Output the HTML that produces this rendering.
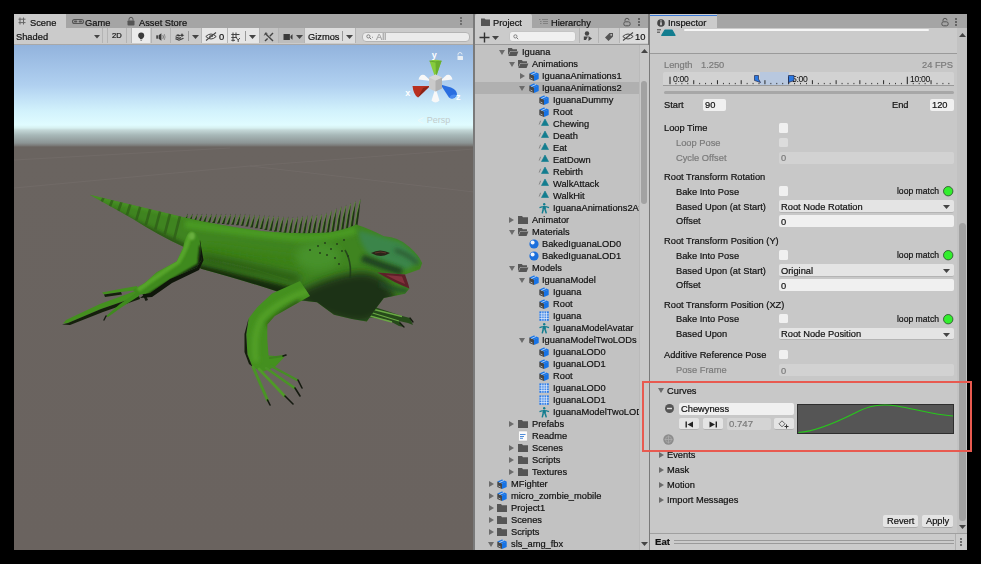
<!DOCTYPE html><html><head><meta charset="utf-8"><style>
*{margin:0;padding:0;box-sizing:border-box}
html,body{width:981px;height:564px;overflow:hidden;background:#000}
body{position:relative;font-family:"Liberation Sans",sans-serif;font-size:9.2px;color:#111;-webkit-font-smoothing:antialiased}
.a{position:absolute}
.t{position:absolute;white-space:nowrap;line-height:12px;font-size:9.3px;will-change:transform;-webkit-text-stroke:0.2px currentColor}
.dis{color:#7a7a7a}
svg{position:absolute;overflow:visible}
.clip{position:absolute;overflow:hidden}
</style></head><body>
<svg width="0" height="0" style="position:absolute"><defs>
<g id="ic-model"><path d="M0.3 2.6 L5 4.6 L5 10 L0.3 8 Z" fill="#474747"/><path d="M5 4.6 L9.7 2.6 L9.7 8 L5 10 Z" fill="#1673e6"/><path d="M0.3 2.6 L5 0.5 L9.7 2.6 L5 4.6 Z" fill="#1673e6"/><path d="M2.4 3.5 L7.2 1.4" stroke="#d8e6f8" stroke-width="0.8"/><path d="M1.5 7 L3.5 8" stroke="#ddd" stroke-width="0.7"/></g>
<g id="ic-folder"><path d="M0 1 L4 1 L5 2.2 L10 2.2 L10 9 L0 9 Z" fill="#555"/></g>
<g id="ic-folderopen"><path d="M0 1 L3.8 1 L4.8 2.2 L9 2.2 L9 4 L2.2 4 L0 8.6 Z" fill="#555"/><path d="M2.4 4.6 L10.4 4.6 L8.6 9 L0.4 9 Z" fill="#555"/></g>
<g id="ic-clip"><path d="M2.5 6.5 L6 0 L9.5 6.5 Z" fill="#137d8f" stroke="#137d8f" stroke-width="0.6" stroke-linejoin="round"/><path d="M0.2 5.5 L1.6 1.8" stroke="#777" stroke-width="0.8"/></g>
<g id="ic-avatar" fill="#137d8f"><circle cx="5.2" cy="1.2" r="1.2"/><path d="M3.6 3 L6.8 3 L7 6.8 L3.4 6.8 Z"/><path d="M0.3 4 L3.6 3 L3.6 4.2 L0.6 5.2 Z"/><path d="M10.2 4 L6.8 3 L6.8 4.2 L9.8 5.2 Z"/><path d="M3.4 6.6 L5 6.8 L3.9 10.4 L2.5 10.2 Z"/><path d="M7 6.6 L5.4 6.8 L6.6 10.4 L8 10.2 Z"/></g>
<g id="ic-mat"><circle cx="5" cy="5" r="4.6" fill="#1b6fdc"/><circle cx="3.6" cy="3.6" r="2" fill="#f2f6fc"/></g>
<g id="ic-mesh"><rect x="0.4" y="0.4" width="9.4" height="9.4" fill="#2a7ae6"/><path d="M0.4 2.8H9.8M0.4 5.1H9.8M0.4 7.4H9.8M2.8 0.4V9.8M5.1 0.4V9.8M7.4 0.4V9.8" stroke="#e8f0fb" stroke-width="0.8"/></g>
<g id="ic-readme"><rect x="0.5" y="0" width="9" height="10" rx="1" fill="#fafafa" stroke="#aaa" stroke-width="0.5"/><path d="M2 3.5H7.5M2 5.5H6M2 7.3H5" stroke="#3b7fd4" stroke-width="0.9"/></g>
<g id="arr-down"><path d="M0 0 L6 0 L3 5 Z" fill="#6b6b6b"/></g>
<g id="arr-right"><path d="M0 0 L5 3 L0 6 Z" fill="#6b6b6b"/></g>
<g id="drop"><path d="M0 0 L7 0 L3.5 4 Z" fill="#444"/></g>
<g id="dots"><circle cx="1" cy="1" r="0.9"/><circle cx="1" cy="4" r="0.9"/><circle cx="1" cy="7" r="0.9"/></g>
</defs></svg>
<div class="a" style="left:14px;top:14px;width:459px;height:14px;background:#a5a5a5"></div>
<div class="a" style="left:14px;top:14px;width:52px;height:15px;background:#cbcbcb"></div>
<div class="a" style="left:14px;top:28px;width:459px;height:16px;background:#cbcbcb"></div>
<div class="a" style="left:14px;top:43.5px;width:459px;height:1px;background:#a8a8a8"></div>
<div class="a" style="left:14px;top:44.5px;width:459px;height:505.5px;background:linear-gradient(#92b3dd 0px,#b0d0f0 40px,#d2f2fc 66px,#e0fcff 80px,#d6f0f0 83px,#c4d8d8 85px,#a8b8b8 90px,#8c9494 98px,#7a7a78 100.5px,#6a6460 102px,#6a635f 506px)"></div>
<svg style="left:14px;top:44px" width="459" height="506" viewBox="14 44 459 506">
<defs>
<filter id="b1" x="-50%" y="-50%" width="200%" height="200%"><feGaussianBlur stdDeviation="0.9"/></filter>
<filter id="b2" x="-50%" y="-50%" width="200%" height="200%"><feGaussianBlur stdDeviation="2"/></filter>
<filter id="b4" x="-50%" y="-50%" width="200%" height="200%"><feGaussianBlur stdDeviation="4"/></filter>
<filter id="b6" x="-50%" y="-50%" width="200%" height="200%"><feGaussianBlur stdDeviation="6"/></filter>
<clipPath id="silc"><path d="M89.7 194.8 Q132 205 183.6 217.2 Q222 226 265 231.5 Q300 234.5 329 232.5 Q345 230 356.2 224.6 Q369 228.8 383.8 236.3 Q398.7 237 409.4 246.9 Q418 254 422.1 262.9 L420 269.3 L405 274.6 L377.4 272.4 L409.4 288.4 L405 293.7 L383.8 298 L377.4 306.5 L366.8 321.4 L352 319 L334 314.7 L317 302.3 L297 300 L275.7 291 Q243.8 280.4 201 268.7 L193 262 L183.6 246.7 Q160 236 132.2 218.4 Q106 204 89.7 194.8 Z"/></clipPath>
<clipPath id="armc"><path d="M300 281 L272 293.6 L257.3 307.2 L248.6 318.4 L246.2 334.5 L247.4 354.4 L252.4 366.8 L262 372 L275 367 L284.6 356.8 L268.5 355.6 L267.3 339.5 L267.3 324.6 L274.7 315.9 L294.5 304.7 L310 296 Z"/></clipPath>
</defs>
<!-- faint ground lines -->
<path d="M14 188 L250 166 L474 192 M14 160 L230 148 M250 166 L474 149" stroke="#7a7370" stroke-width="0.8" fill="none" opacity="0.5"/>
<!-- far front leg -->
<path d="M352 303 L373 306.5 L390 312 L402 316 L410 318 L413 325 L408 323 L399 321 L404 327 L399 326 L388 320 L375 318 L356 316 Z" fill="#264a1a"/>
<path d="M370 308.5 L402 316.5 M371 312.5 L399 321 M370 316 L392 322" stroke="#6aa844" stroke-width="1.3"/>
<g stroke="#151a10" stroke-width="1.3" stroke-linecap="round"><path d="M410 318 L413 322"/><path d="M400 323 L404 327"/></g>
<!-- crest -->
<path d="M183.7 220.6 Q185.6 217.5 187.9 213.5 Q187.3 218.0 186.3 220.6 Z" fill="#1f3414"/>
<path d="M184.0 219.6 Q185.3 217.5 187.5 215.0" stroke="#5e9e34" stroke-width="0.7" fill="none"/>
<path d="M188.4 221.0 Q190.3 217.7 192.7 213.5 Q192.1 218.3 191.1 221.0 Z" fill="#1f3414"/>
<path d="M188.8 220.0 Q190.0 217.7 192.3 215.0" stroke="#5e9e34" stroke-width="0.7" fill="none"/>
<path d="M193.2 221.4 Q195.1 217.9 197.5 213.5 Q196.9 218.5 195.8 221.4 Z" fill="#1f3414"/>
<path d="M193.5 220.4 Q194.8 217.9 197.1 215.0" stroke="#5e9e34" stroke-width="0.7" fill="none"/>
<path d="M197.9 221.9 Q199.9 218.0 202.3 213.5 Q201.7 218.7 200.6 221.9 Z" fill="#1f3414"/>
<path d="M198.2 220.9 Q199.6 218.0 201.9 215.0" stroke="#5e9e34" stroke-width="0.7" fill="none"/>
<path d="M202.7 222.3 Q204.6 218.2 207.0 213.5 Q206.4 218.9 205.3 222.3 Z" fill="#1f3414"/>
<path d="M203.0 221.3 Q204.3 218.2 206.6 215.0" stroke="#5e9e34" stroke-width="0.7" fill="none"/>
<path d="M207.4 222.7 Q209.4 218.4 211.8 213.5 Q211.2 219.1 210.1 222.7 Z" fill="#1f3414"/>
<path d="M207.8 221.7 Q209.1 218.4 211.4 215.0" stroke="#5e9e34" stroke-width="0.7" fill="none"/>
<path d="M212.2 223.1 Q214.1 218.6 216.6 213.5 Q216.0 219.3 214.8 223.1 Z" fill="#1f3414"/>
<path d="M212.5 222.1 Q213.8 218.6 216.2 215.0" stroke="#5e9e34" stroke-width="0.7" fill="none"/>
<path d="M216.9 223.6 Q218.9 218.7 221.4 213.5 Q220.7 219.5 219.6 223.6 Z" fill="#1f3414"/>
<path d="M217.2 222.6 Q218.6 218.7 221.0 215.0" stroke="#5e9e34" stroke-width="0.7" fill="none"/>
<path d="M221.7 224.0 Q223.6 218.9 226.2 213.5 Q225.5 219.7 224.3 224.0 Z" fill="#1f3414"/>
<path d="M222.0 223.0 Q223.3 218.9 225.8 215.0" stroke="#5e9e34" stroke-width="0.7" fill="none"/>
<path d="M226.4 224.4 Q228.4 219.1 231.0 213.5 Q230.3 220.0 229.1 224.4 Z" fill="#1f3414"/>
<path d="M226.8 223.4 Q228.1 219.1 230.6 215.0" stroke="#5e9e34" stroke-width="0.7" fill="none"/>
<path d="M231.2 224.8 Q233.1 219.2 235.7 213.5 Q235.0 220.2 233.8 224.8 Z" fill="#1f3414"/>
<path d="M231.5 223.8 Q232.8 219.2 235.3 215.0" stroke="#5e9e34" stroke-width="0.7" fill="none"/>
<path d="M235.9 225.3 Q237.9 219.4 240.5 213.5 Q239.8 220.4 238.6 225.3 Z" fill="#1f3414"/>
<path d="M236.2 224.3 Q237.6 219.4 240.1 215.0" stroke="#5e9e34" stroke-width="0.7" fill="none"/>
<path d="M240.7 225.8 Q242.7 219.7 245.3 213.6 Q244.6 220.7 243.3 225.8 Z" fill="#1f3414"/>
<path d="M241.0 224.8 Q242.3 219.7 244.9 215.1" stroke="#5e9e34" stroke-width="0.7" fill="none"/>
<path d="M245.4 226.6 Q247.4 220.2 250.1 213.9 Q249.4 221.3 248.1 226.6 Z" fill="#1f3414"/>
<path d="M245.8 225.6 Q247.1 220.2 249.7 215.4" stroke="#5e9e34" stroke-width="0.7" fill="none"/>
<path d="M250.2 227.5 Q252.2 220.7 254.9 214.2 Q254.1 221.8 252.8 227.5 Z" fill="#1f3414"/>
<path d="M250.5 226.5 Q251.8 220.7 254.5 215.7" stroke="#5e9e34" stroke-width="0.7" fill="none"/>
<path d="M254.9 228.3 Q256.9 221.2 259.7 214.5 Q258.9 222.4 257.6 228.3 Z" fill="#1f3414"/>
<path d="M255.2 227.3 Q256.6 221.2 259.3 216.0" stroke="#5e9e34" stroke-width="0.7" fill="none"/>
<path d="M259.7 229.1 Q261.7 221.7 264.5 214.8 Q263.7 222.9 262.3 229.1 Z" fill="#1f3414"/>
<path d="M260.0 228.1 Q261.3 221.7 264.1 216.3" stroke="#5e9e34" stroke-width="0.7" fill="none"/>
<path d="M264.4 229.9 Q266.5 222.2 269.3 215.0 Q268.5 223.5 267.1 229.9 Z" fill="#1f3414"/>
<path d="M264.8 228.9 Q266.1 222.2 268.9 216.5" stroke="#5e9e34" stroke-width="0.7" fill="none"/>
<path d="M269.2 230.7 Q271.2 222.7 274.1 215.3 Q273.2 224.0 271.8 230.7 Z" fill="#1f3414"/>
<path d="M269.5 229.7 Q270.9 222.7 273.7 216.8" stroke="#5e9e34" stroke-width="0.7" fill="none"/>
<path d="M273.9 231.5 Q276.0 223.2 278.9 215.6 Q278.0 224.6 276.6 231.5 Z" fill="#1f3414"/>
<path d="M274.2 230.5 Q275.6 223.2 278.5 217.1" stroke="#5e9e34" stroke-width="0.7" fill="none"/>
<path d="M278.7 232.3 Q280.7 223.7 283.7 215.9 Q282.8 225.1 281.3 232.3 Z" fill="#1f3414"/>
<path d="M279.0 231.3 Q280.4 223.7 283.3 217.4" stroke="#5e9e34" stroke-width="0.7" fill="none"/>
<path d="M283.4 233.1 Q285.5 224.2 288.4 216.2 Q287.6 225.6 286.1 233.1 Z" fill="#1f3414"/>
<path d="M283.8 232.1 Q285.1 224.2 288.0 217.7" stroke="#5e9e34" stroke-width="0.7" fill="none"/>
<path d="M288.2 233.9 Q290.2 224.6 293.2 216.5 Q292.3 226.2 290.8 233.9 Z" fill="#1f3414"/>
<path d="M288.5 232.9 Q289.9 224.6 292.8 218.0" stroke="#5e9e34" stroke-width="0.7" fill="none"/>
<path d="M292.9 234.0 Q295.0 224.4 298.0 216.1 Q297.1 226.0 295.6 234.0 Z" fill="#1f3414"/>
<path d="M293.2 233.0 Q294.6 224.4 297.6 217.6" stroke="#5e9e34" stroke-width="0.7" fill="none"/>
<path d="M297.7 234.0 Q299.8 224.2 302.8 215.6 Q301.9 225.8 300.3 234.0 Z" fill="#1f3414"/>
<path d="M298.0 233.0 Q299.4 224.2 302.4 217.1" stroke="#5e9e34" stroke-width="0.7" fill="none"/>
<path d="M302.4 234.0 Q304.5 223.9 307.6 215.1 Q306.7 225.6 305.1 234.0 Z" fill="#1f3414"/>
<path d="M302.8 233.0 Q304.1 223.9 307.2 216.6" stroke="#5e9e34" stroke-width="0.7" fill="none"/>
<path d="M307.2 234.0 Q309.3 223.6 312.4 214.7 Q311.4 225.3 309.8 234.0 Z" fill="#1f3414"/>
<path d="M307.5 233.0 Q308.9 223.6 312.0 216.2" stroke="#5e9e34" stroke-width="0.7" fill="none"/>
<path d="M311.9 234.0 Q314.0 223.3 317.2 214.2 Q316.2 225.1 314.6 234.0 Z" fill="#1f3414"/>
<path d="M312.2 233.0 Q313.6 223.3 316.8 215.7" stroke="#5e9e34" stroke-width="0.7" fill="none"/>
<path d="M316.7 234.0 Q318.8 223.0 322.0 213.7 Q321.0 224.8 319.3 234.0 Z" fill="#1f3414"/>
<path d="M317.0 233.0 Q318.4 223.0 321.6 215.2" stroke="#5e9e34" stroke-width="0.7" fill="none"/>
<path d="M321.4 233.7 Q323.6 222.0 326.8 212.2 Q325.8 224.0 324.1 233.7 Z" fill="#1f3414"/>
<path d="M321.8 232.7 Q323.2 222.0 326.4 213.7" stroke="#5e9e34" stroke-width="0.7" fill="none"/>
<path d="M326.2 233.2 Q328.3 220.5 331.7 210.0 Q330.6 222.6 328.8 233.2 Z" fill="#1f3414"/>
<path d="M326.5 232.2 Q327.9 220.5 331.3 211.5" stroke="#5e9e34" stroke-width="0.7" fill="none"/>
<path d="M330.9 232.8 Q333.1 219.0 336.6 207.8 Q335.5 221.3 333.6 232.8 Z" fill="#1f3414"/>
<path d="M331.2 231.8 Q332.7 219.0 336.2 209.3" stroke="#5e9e34" stroke-width="0.7" fill="none"/>
<path d="M335.7 232.3 Q337.9 217.7 341.4 206.0 Q340.3 220.2 338.3 232.3 Z" fill="#1f3414"/>
<path d="M336.0 231.3 Q337.4 217.7 341.0 207.5" stroke="#5e9e34" stroke-width="0.7" fill="none"/>
<path d="M340.4 231.4 Q342.6 216.5 346.2 204.5 Q345.0 219.0 343.1 231.4 Z" fill="#1f3414"/>
<path d="M340.8 230.4 Q342.2 216.5 345.8 206.0" stroke="#5e9e34" stroke-width="0.7" fill="none"/>
<path d="M345.2 229.9 Q347.4 214.6 351.0 202.4 Q349.8 217.1 347.8 229.9 Z" fill="#1f3414"/>
<path d="M345.5 228.9 Q347.0 214.6 350.6 203.9" stroke="#5e9e34" stroke-width="0.7" fill="none"/>
<path d="M349.9 228.4 Q352.2 212.8 355.8 200.4 Q354.6 215.4 352.6 228.4 Z" fill="#1f3414"/>
<path d="M350.2 227.4 Q351.7 212.8 355.4 201.9" stroke="#5e9e34" stroke-width="0.7" fill="none"/>
<path d="M354.7 226.8 Q356.9 211.2 360.6 198.8 Q359.3 213.8 357.3 226.8 Z" fill="#1f3414"/>
<path d="M355.0 225.8 Q356.5 211.2 360.2 200.3" stroke="#5e9e34" stroke-width="0.7" fill="none"/>
<!-- back toes -->
<path d="M138 290 L100 304 L66 320 L63 323.5 L68 323 L101 309 L139 296 Z" fill="#44901f"/>
<path d="M139 296 L101 309 L68 323 L62 324.5 L70 325 L103 312 L140 299 Z" fill="#15200c"/>
<path d="M137 286 L120 289 L102 292.5 L104 294.5 L121 292 L138 290 Z" fill="#44901f"/>
<path d="M104 294.5 L121 292 L122 294.5 L105 297 Z" fill="#15200c"/>
<path d="M137 292 L120 304 L106 316 L108 317 L122 307 L139 296 Z" fill="#3f8a1e"/>
<path d="M106 316 L104 320" stroke="#151a10" stroke-width="1.4" stroke-linecap="round"/>
<path d="M142 293 L145.5 301 L148 300 L145 293 Z" fill="#151a10"/>
<!-- silhouette -->
<path d="M89.7 194.8 Q132 205 183.6 217.2 Q222 226 265 231.5 Q300 234.5 329 232.5 Q345 230 356.2 224.6 Q369 228.8 383.8 236.3 Q398.7 237 409.4 246.9 Q418 254 422.1 262.9 L420 269.3 L405 274.6 L377.4 272.4 L409.4 288.4 L405 293.7 L383.8 298 L377.4 306.5 L366.8 321.4 L352 319 L334 314.7 L317 302.3 L297 300 L275.7 291 Q243.8 280.4 201 268.7 L193 262 L183.6 246.7 Q160 236 132.2 218.4 Q106 204 89.7 194.8 Z" fill="#3f8420"/>
<g clip-path="url(#silc)">
  <!-- tail shading -->
  <path d="M89 194 Q132 204 184 216" stroke="#4e9a28" stroke-width="4" fill="none" filter="url(#b2)"/>
  <path d="M110 212 Q150 232 190 250" stroke="#2a5216" stroke-width="8" fill="none" filter="url(#b2)"/>
  <g stroke="#2f5c18" stroke-width="2.6" opacity="0.75"><path d="M104 196.7 L101.3 202.5"/><path d="M113 198.5 L109.8 206.8"/><path d="M122 200.3 L118.3 211.0"/><path d="M131 202.1 L126.8 215.3"/><path d="M141 204.1 L136.3 220.0"/><path d="M151 206.1 L145.8 224.8"/><path d="M161 208.1 L155.3 229.5"/><path d="M171 210.1 L164.7 234.2"/><path d="M181 212.1 L174.2 239.0"/></g>
  <!-- body top highlight -->
  <path d="M185 224 Q240 232 300 238 Q330 238 356 230" stroke="#4a9a22" stroke-width="8" fill="none" filter="url(#b2)"/>
  <!-- mid darker band -->
  <path d="M200 248 Q250 256 300 262" stroke="#3a8018" stroke-width="10" fill="none" filter="url(#b4)"/>
  <path d="M222 262 Q255 268 288 280" stroke="#55a02a" stroke-width="1" fill="none" opacity="0.8"/>
  <!-- lower shadow -->
  <path d="M196 270 Q240 281 300 296" stroke="#142a0a" stroke-width="14" fill="none" filter="url(#b2)"/>
  <path d="M200 258 Q250 268 300 280" stroke="#2a5a14" stroke-width="10" fill="none" filter="url(#b4)"/>
  <!-- shoulder highlight -->
  <ellipse cx="318" cy="256" rx="22" ry="14" fill="#46922a" filter="url(#b4)"/>
  <!-- throat dark -->
  <path d="M292 296 Q325 276 360 272 Q388 272 396 300 Q380 322 360 324 Q320 320 292 296 Z" fill="#1c3212" filter="url(#b4)"/>
  <!-- head top teal -->
  <path d="M358 230 Q380 236 400 242 Q415 252 420 262 L405 270 Q385 262 370 255 Q360 246 358 230 Z" fill="#3a8654" filter="url(#b2)" opacity="0.8"/>
  <path d="M362 258 Q382 266 402 272" stroke="#1f4022" stroke-width="7" fill="none" filter="url(#b2)"/>
  <path d="M395 250 Q410 255 418 264" stroke="#2c5a32" stroke-width="4" fill="none" filter="url(#b2)"/>
  <path d="M380 284 Q395 290 408 291" stroke="#24482a" stroke-width="4" fill="none" filter="url(#b2)"/>
  <g fill="#24401a">
  <circle cx="318" cy="246" r="1"/><circle cx="325" cy="243" r="1"/><circle cx="331" cy="249" r="1"/><circle cx="337" cy="244" r="1"/><circle cx="342" cy="251" r="1"/><circle cx="327" cy="255" r="1"/><circle cx="335" cy="258" r="1"/><circle cx="344" cy="240" r="1"/><circle cx="348" cy="256" r="1"/><circle cx="320" cy="253" r="1"/><circle cx="310" cy="250" r="1"/><circle cx="339" cy="264" r="1"/>
  </g>
</g>
<!-- back leg (front of body) -->
<defs><clipPath id="legc"><path d="M190 231 Q198 230 200.5 245.6 L201.2 260.2 L196.5 267.5 L170 279 L150 293 L138 295 L133 290 L145 282.7 L156.6 272.2 L176.6 261.5 L183 248 Q185 236 190 231 Z"/></clipPath></defs>
<path d="M200 240 L203.5 260.2 L199 270 L172 283 L152 297 L140 298 L150 290 L170 276 L195 264 Z" fill="#0f160a"/>
<path d="M190 231 Q198 230 200.5 245.6 L201.2 260.2 L196.5 267.5 L170 279 L150 293 L138 295 L133 290 L145 282.7 L156.6 272.2 L176.6 261.5 L183 248 Q185 236 190 231 Z" fill="#3f8a1e"/>
<g clip-path="url(#legc)">
<path d="M190 234 Q186 250 178 262 Q160 274 138 290" stroke="#56a42a" stroke-width="5" fill="none" filter="url(#b1)"/>
<path d="M203 246 L201 266 L172 283 L150 297" stroke="#0e1608" stroke-width="7" fill="none" filter="url(#b1)"/>
<ellipse cx="192" cy="236" rx="3" ry="4" fill="#6ab040" filter="url(#b1)"/>
</g>
<path d="M345 250 Q352 262 350 278" stroke="#1f3a1a" stroke-width="1.6" fill="none" opacity="0.8"/>
<!-- mouth -->
<path d="M377.4 272.4 L405 274.6 Q408 283 409.4 288.4 Q395 283 377.4 272.4 Z" fill="#5e2028"/>
<path d="M386 275 L402 276.5 L405 284 Q395 280 386 275 Z" fill="#8a3440" opacity="0.85"/>
<path d="M371 253 Q380 248 390 253 Q381 259 371 253 Z" fill="#2a2418"/><path d="M375 253 Q381 251 386 253" stroke="#6a3a30" stroke-width="0.8" fill="none"/>
<!-- near front leg -->
<path d="M300 281 L272 293.6 L257.3 307.2 L248.6 318.4 L246.2 334.5 L247.4 354.4 L252.4 366.8 L262 372 L275 367 L284.6 356.8 L268.5 355.6 L267.3 339.5 L267.3 324.6 L274.7 315.9 L294.5 304.7 L310 296 Z" fill="#44901f"/>
<g clip-path="url(#armc)">
  <path d="M310 290 Q280 300 262 318 Q252 335 256 362" stroke="#52a028" stroke-width="6" fill="none" filter="url(#b2)"/>
  <path d="M246 320 L246 356" stroke="#1c3010" stroke-width="3" fill="none" filter="url(#b2)"/>
  <path d="M300 302 Q280 312 268 326" stroke="#2a5418" stroke-width="5" fill="none" filter="url(#b2)"/>
</g>
<path d="M246.2 334.5 L247.4 354.4 L252.4 366.8 L249 364 L244.5 352 L244.5 334 L248.6 318.4 Z" fill="#141e0c"/>
<g stroke-linecap="round" fill="none">
<path d="M253 367 L267.5 400" stroke="#4a9426" stroke-width="3"/>
<path d="M259 369 L284.6 396" stroke="#4f9a28" stroke-width="2.8"/>
<path d="M266 368 L294.5 388" stroke="#4a9426" stroke-width="2.6"/>
<path d="M271 366 L297 380" stroke="#468e24" stroke-width="2.4"/>
<path d="M270 358 L283 356" stroke="#3f8020" stroke-width="2"/>
</g>
<g stroke="#151a10" stroke-width="1.6" stroke-linecap="round">
<path d="M267.5 400 L270 405"/><path d="M285 396 L293 404"/><path d="M295 388 L300 396"/><path d="M298 380 L302 388"/><path d="M283 356 L286 355"/>
</g>
<!-- gizmo -->
<path d="M429.5 61 Q435.5 58.5 441.5 61 L436 77 L435 77 Z" fill="#86cc3c"/>
<path d="M429.5 61 Q435.5 63 441.5 61" stroke="#5a9a2a" stroke-width="0.8" fill="none"/>
<path d="M435.5 61.5 L441.5 61 L436 77 Z" fill="#6aae2e"/>
<path d="M412.5 86 Q413.5 95 418 97.5 L430 86 Z" fill="#b83020"/>
<path d="M418 97.5 L430 86 L423 88 Z" fill="#8a2418"/>
<path d="M440.5 84.5 L451 87.5 Q457.5 90 457 95.5 Q453.5 100 449 97.5 Z" fill="#2a6ee0"/>
<path d="M449 97.5 Q453.5 100 457 95.5 Q452 93 449 97.5 Z" fill="#4a8cf0"/>
<path d="M418.5 79.5 Q420 73.5 424.5 75 L431 81 Z" fill="#f8f8f8"/>
<path d="M452.5 79.5 Q451 73.5 446.5 75 L440 81 Z" fill="#f8f8f8"/>
<path d="M431.5 100.5 Q435.5 104.5 439.5 100.5 L435.5 88 Z" fill="#f8f8f8"/>
<path d="M429 77.5 L435.5 74.5 L442 77.5 L442 88.5 L435.5 91.5 L429 88.5 Z" fill="#cacaca"/>
<path d="M435.5 80.5 L442 77.5 L442 88.5 L435.5 91.5 Z" fill="#b0b0b0"/>
<path d="M429 77.5 L435.5 74.5 L442 77.5 L435.5 80.5 Z" fill="#d8d8d8"/>
<text x="431.8" y="57.5" font-family="Liberation Sans" font-size="9" font-weight="bold" fill="#fff">y</text>
<text x="405.2" y="96" font-family="Liberation Sans" font-size="9" font-weight="bold" fill="#fff">x</text>
<text x="456" y="99.5" font-family="Liberation Sans" font-size="9" font-weight="bold" fill="#fff">z</text>
<path d="M458 55.5 V54.5 A2 2 0 0 1 462 54.5" stroke="#e8eef4" stroke-width="0.9" fill="none"/>
<rect x="457.5" y="56" width="5.5" height="4" rx="0.5" fill="#e8eef4"/>
<text x="426.8" y="122.8" font-family="Liberation Sans" font-size="9" fill="#c2cccc">Persp</text>
<path d="M423.5 117.5 L418 120.5 L423.5 123.5" stroke="#eef8f8" stroke-width="1" fill="none"/>
</svg>
<div class="t " style="left:30px;top:16.6px;">Scene</div>
<svg style="left:18px;top:17px;" width="8" height="8" viewBox="0 0 8 8"><path d="M2 0.5V7.5M5.5 0.5V7.5M0.5 2.2H7.5M0.5 5.6H7.5" stroke="#666" stroke-width="1"/></svg>
<div class="t " style="left:85.4px;top:16.6px;">Game</div>
<svg style="left:72px;top:19px;" width="12" height="5" viewBox="0 0 12 5"><rect x="0.5" y="0.5" width="11" height="4" rx="2" fill="none" stroke="#555" stroke-width="1.1"/><rect x="2" y="1.6" width="3.3" height="1.8" rx="0.9" fill="#555"/><rect x="6.7" y="1.6" width="3.3" height="1.8" rx="0.9" fill="#555"/></svg>
<div class="t " style="left:138.8px;top:16.6px;">Asset Store</div>
<svg style="left:127px;top:17px;" width="8" height="9" viewBox="0 0 8 9"><path d="M2 3.5V2.3A2 2 0 0 1 6 2.3V3.5" fill="none" stroke="#555" stroke-width="1"/><rect x="0.5" y="3.4" width="7" height="5.2" rx="0.8" fill="#555"/></svg>
<div class="a" style="left:460px;top:17px;width:3px;height:9px;color:#555"><svg width="2" height="8" style="left:0;top:0" fill="#555"><use href="#dots"/></svg></div>
<div class="t " style="left:16px;top:31.0px;">Shaded</div>
<svg style="left:93.5px;top:35px;" width="6" height="4" viewBox="0 0 6 4"><path d="M0 0H6L3 3.6Z" fill="#444"/></svg>
<div class="a" style="left:102px;top:28px;width:1px;height:15px;background:#b4b4b4"></div>
<div class="a" style="left:107px;top:28px;width:1px;height:15px;background:#b4b4b4"></div>
<div class="a" style="left:108px;top:28px;width:18px;height:15px;background:#cbcbcb"></div>
<div class="t " style="left:111.5px;top:30.4px;font-size:7.6px">2D</div>
<div class="a" style="left:126px;top:28px;width:1px;height:15px;background:#b4b4b4"></div>
<div class="a" style="left:131px;top:28px;width:1px;height:15px;background:#b4b4b4"></div>
<div class="a" style="left:132px;top:28px;width:18px;height:15px;background:#ebebeb"></div>
<svg style="left:137.5px;top:31.5px;" width="7" height="9" viewBox="0 0 7 9"><circle cx="3.2" cy="3.4" r="3" fill="#3a3a3a"/><path d="M1.6 5.5H4.8L4.4 7H2Z" fill="#3a3a3a"/><path d="M2 7.8H4.4L3.8 8.6H2.6Z" fill="#3a3a3a"/></svg>
<div class="a" style="left:151px;top:28px;width:1px;height:15px;background:#b4b4b4"></div>
<div class="a" style="left:152px;top:28px;width:18px;height:15px;background:#cbcbcb"></div>
<svg style="left:155.5px;top:32.5px;" width="10" height="8" viewBox="0 0 10 8"><rect x="0.3" y="2.3" width="1.6" height="3.4" fill="#3a3a3a"/><path d="M2.6 2.3L5.4 0.3V7.7L2.6 5.7Z" fill="#3a3a3a"/><path d="M6.8 2.2Q8 4 6.8 5.8" stroke="#555" stroke-width="0.8" fill="none"/><path d="M8.2 1Q10 4 8.2 7" stroke="#666" stroke-width="0.6" fill="none"/></svg>
<div class="a" style="left:170px;top:28px;width:1px;height:15px;background:#b4b4b4"></div>
<div class="a" style="left:171px;top:28px;width:30px;height:15px;background:#cbcbcb"></div>
<svg style="left:174.5px;top:32.5px;" width="10" height="8" viewBox="0 0 10 8"><path d="M0.5 3.8L4 5.4L6 4.6M0.5 5.6L4 7.2L8.5 5.2" stroke="#3a3a3a" stroke-width="1.2" fill="none"/><path d="M0.5 2.2L3 1.2L6 2.6L4 3.6Z" fill="#3a3a3a"/><path d="M7 0L7.7 1.6L9.4 2.3L7.7 3L7 4.6L6.3 3L4.6 2.3L6.3 1.6Z" fill="#3a3a3a"/></svg>
<div class="a" style="left:188px;top:31px;width:1px;height:10px;background:#999"></div>
<svg style="left:192px;top:34.5px;" width="7" height="4" viewBox="0 0 7 4"><use href="#drop"/></svg>
<div class="a" style="left:201px;top:28px;width:1px;height:15px;background:#b4b4b4"></div>
<div class="a" style="left:202px;top:28px;width:25px;height:15px;background:#e6e6e6"></div>
<svg style="left:205px;top:32px;" width="13" height="9" viewBox="0 0 13 9"><path d="M0.8 4.5Q6 -0.5 11.2 4.5Q6 9.5 0.8 4.5Z" fill="none" stroke="#444" stroke-width="1"/><path d="M1 8.5L11 0.5" stroke="#444" stroke-width="1.1"/><path d="M4 4.5Q6 2.5 8 4.5" stroke="#444" stroke-width="0.9" fill="none"/></svg>
<div class="t " style="left:219px;top:30.8px;font-size:9.4px">0</div>
<div class="a" style="left:227px;top:28px;width:1px;height:15px;background:#b4b4b4"></div>
<div class="a" style="left:228px;top:28px;width:31px;height:15px;background:#e6e6e6"></div>
<svg style="left:231px;top:31.5px;" width="10" height="10" viewBox="0 0 10 10"><path d="M2 0.5V9.5M5 0.5V6M0.3 2.5H8.5M0.3 5.5H6M0.3 8.3H4" stroke="#444" stroke-width="1"/><path d="M5.5 6L7.2 8L8.9 6M7.2 8V10" stroke="#444" stroke-width="1" fill="none"/></svg>
<div class="a" style="left:245px;top:31px;width:1px;height:10px;background:#999"></div>
<svg style="left:249px;top:34.5px;" width="7" height="4" viewBox="0 0 7 4"><use href="#drop"/></svg>
<div class="a" style="left:259px;top:28px;width:1px;height:15px;background:#b4b4b4"></div>
<div class="a" style="left:260px;top:28px;width:18px;height:15px;background:#c4c4c4"></div>
<svg style="left:264px;top:31.5px;" width="10" height="10" viewBox="0 0 10 10"><path d="M1 1.2L9 9" stroke="#444" stroke-width="1.4"/><path d="M9 1L5.8 4.2" stroke="#444" stroke-width="1.4"/><path d="M1 9L3.6 6.4" stroke="#444" stroke-width="1.4"/><path d="M0.3 3.4L2 0.6L3.4 2.2" stroke="#444" stroke-width="1" fill="none"/></svg>
<div class="a" style="left:278px;top:28px;width:1px;height:15px;background:#b4b4b4"></div>
<div class="a" style="left:279px;top:28px;width:25px;height:15px;background:#bdbdbd"></div>
<svg style="left:283px;top:32.5px;" width="11" height="8" viewBox="0 0 11 8"><rect x="0.5" y="1" width="6.4" height="6" fill="#3a3a3a"/><path d="M7.5 3L9.5 1.3V6.7L7.5 5Z" fill="#3a3a3a"/></svg>
<svg style="left:295.5px;top:34.5px;" width="7" height="4" viewBox="0 0 7 4"><use href="#drop"/></svg>
<div class="a" style="left:304px;top:28px;width:1px;height:15px;background:#b4b4b4"></div>
<div class="a" style="left:305px;top:28px;width:50px;height:15px;background:#dedede"></div>
<div class="t " style="left:307.5px;top:31.0px;font-size:9.3px">Gizmos</div>
<div class="a" style="left:342px;top:31px;width:1px;height:10px;background:#999"></div>
<svg style="left:345.5px;top:34.5px;" width="7" height="4" viewBox="0 0 7 4"><use href="#drop"/></svg>
<div class="a" style="left:355px;top:28px;width:1px;height:15px;background:#b4b4b4"></div>
<div class="a" style="left:362px;top:31.5px;width:108px;height:10px;background:#ebebeb;border:1px solid #b4b4b4;border-radius:4px"></div>
<svg style="left:366px;top:33.5px;" width="8" height="6" viewBox="0 0 8 6"><circle cx="2.4" cy="2.4" r="1.6" fill="none" stroke="#777" stroke-width="0.9"/><path d="M3.6 3.6L5.2 5.2" stroke="#777" stroke-width="1"/><path d="M6 2.6L7 3.3L6 4" fill="#777"/></svg>
<div class="t " style="left:375.6px;top:31.0px;color:#a0a0a0;font-size:9.4px">All</div>
<div class="a" style="left:473px;top:14px;width:2px;height:536px;background:#7a7a7a"></div>
<div class="a" style="left:475px;top:14px;width:173px;height:14px;background:#a5a5a5"></div>
<div class="a" style="left:475px;top:14px;width:57px;height:15px;background:#cbcbcb;border-radius:2px 2px 0 0"></div>
<div class="a" style="left:475px;top:28px;width:173px;height:16px;background:#cbcbcb"></div>
<div class="a" style="left:475px;top:43.5px;width:173px;height:1px;background:#999"></div>
<div class="a" style="left:475px;top:44.5px;width:173px;height:505.5px;background:#c2c2c2"></div>
<div class="a" style="left:648px;top:14px;width:2px;height:536px;background:#7a7a7a"></div>
<div class="t " style="left:492.5px;top:16.6px;">Project</div>
<svg style="left:481px;top:17.5px;" width="9" height="8" viewBox="0 0 9 8"><path d="M0 0.5H3.6L4.6 1.6H9V8H0Z" fill="#555"/></svg>
<div class="t " style="left:550.5px;top:16.6px;">Hierarchy</div>
<svg style="left:539px;top:18.5px;" width="9" height="6" viewBox="0 0 9 6"><path d="M0 0.5H1.5M3 0.5H9M1 2.5H2.5M4 2.5H9M1 4.5H2.5M4 4.5H9" stroke="#777" stroke-width="0.8"/></svg>
<svg style="left:622.5px;top:17.5px;" width="8" height="8" viewBox="0 0 8 8"><path d="M2 3.5V2.3A2 2 0 0 1 6 2.3" fill="none" stroke="#555" stroke-width="1"/><rect x="0.8" y="3.8" width="6.4" height="4" rx="1.8" fill="none" stroke="#555" stroke-width="1"/></svg>
<svg style="left:637.5px;top:17.5px" width="2" height="8" fill="#444"><use href="#dots"/></svg>
<svg style="left:478.5px;top:32px;" width="11" height="11" viewBox="0 0 11 11"><path d="M5.5 0.5V10.5M0.5 5.5H10.5" stroke="#333" stroke-width="1.4"/></svg>
<svg style="left:491.5px;top:35.5px;" width="6" height="4" viewBox="0 0 6 4"><use href="#drop"/></svg>
<div class="a" style="left:508.5px;top:31px;width:67.5px;height:11px;background:#f0f0f0;border:1px solid #c4c4c4;border-radius:3px"></div>
<svg style="left:513px;top:34px;" width="6" height="6" viewBox="0 0 6 6"><circle cx="2.4" cy="2.4" r="1.6" fill="none" stroke="#777" stroke-width="0.9"/><path d="M3.6 3.6L5.2 5.2" stroke="#777" stroke-width="1"/></svg>
<div class="a" style="left:578.5px;top:28px;width:1px;height:15px;background:#b4b4b4"></div>
<div class="a" style="left:579.5px;top:28px;width:18.5px;height:15px;background:#cbcbcb"></div>
<svg style="left:583px;top:31px;" width="11" height="11" viewBox="0 0 11 11"><circle cx="4" cy="2.5" r="2.2" fill="#444"/><path d="M0.8 9V5.5H5L3 9Z" fill="#444"/><path d="M5.5 5L9 7.5L5.5 10Z" fill="#444"/></svg>
<div class="a" style="left:598px;top:28px;width:1px;height:15px;background:#b4b4b4"></div>
<div class="a" style="left:599px;top:28px;width:20px;height:15px;background:#cbcbcb"></div>
<svg style="left:603.5px;top:31.5px;" width="10" height="10" viewBox="0 0 10 10"><path d="M1 5.5L5.5 1H9V4.5L4.5 9Z" fill="#555"/><circle cx="7.2" cy="2.8" r="0.9" fill="#cbcbcb"/></svg>
<div class="a" style="left:619px;top:28px;width:1px;height:15px;background:#b4b4b4"></div>
<div class="a" style="left:620px;top:28px;width:28px;height:15px;background:#dcdcdc"></div>
<svg style="left:622px;top:32px;" width="13" height="9" viewBox="0 0 13 9"><path d="M0.8 4.5Q6 -0.5 11.2 4.5Q6 9.5 0.8 4.5Z" fill="none" stroke="#444" stroke-width="1"/><path d="M1 8.5L11 0.5" stroke="#444" stroke-width="1.1"/></svg>
<div class="t " style="left:634.5px;top:31.1px;font-size:9.4px">10</div>
<div class="clip" style="left:475px;top:44.5px;width:163.5px;height:505.5px">
<svg style="left:23.5px;top:5.0px" width="6" height="5"><use href="#arr-down"/></svg>
<svg style="left:32.7px;top:2.5px" width="11" height="11"><use href="#ic-folderopen"/></svg>
<div class="t" style="left:46.5px;top:1.7px">Iguana</div>
<svg style="left:33.9px;top:17.0px" width="6" height="5"><use href="#arr-down"/></svg>
<svg style="left:43.1px;top:14.5px" width="11" height="11"><use href="#ic-folderopen"/></svg>
<div class="t" style="left:56.9px;top:13.7px">Animations</div>
<svg style="left:44.9px;top:28.5px" width="5" height="6"><use href="#arr-right"/></svg>
<svg style="left:53.6px;top:26.5px" width="11" height="11"><use href="#ic-model"/></svg>
<div class="t" style="left:67.4px;top:25.7px">IguanaAnimations1</div>
<div class="a" style="left:0;top:37.0px;width:164px;height:12px;background:#b0b0b0"></div>
<svg style="left:44.4px;top:41.0px" width="6" height="5"><use href="#arr-down"/></svg>
<svg style="left:53.6px;top:38.5px" width="11" height="11"><use href="#ic-model"/></svg>
<div class="t" style="left:67.4px;top:37.7px">IguanaAnimations2</div>
<svg style="left:64.0px;top:50.5px" width="11" height="11"><use href="#ic-model"/></svg>
<div class="t" style="left:77.8px;top:49.7px">IguanaDummy</div>
<svg style="left:64.0px;top:62.5px" width="11" height="11"><use href="#ic-model"/></svg>
<div class="t" style="left:77.8px;top:61.7px">Root</div>
<svg style="left:64.0px;top:74.5px" width="11" height="11"><use href="#ic-clip"/></svg>
<div class="t" style="left:77.8px;top:73.7px">Chewing</div>
<svg style="left:64.0px;top:86.5px" width="11" height="11"><use href="#ic-clip"/></svg>
<div class="t" style="left:77.8px;top:85.7px">Death</div>
<svg style="left:64.0px;top:98.5px" width="11" height="11"><use href="#ic-clip"/></svg>
<div class="t" style="left:77.8px;top:97.7px">Eat</div>
<svg style="left:64.0px;top:110.5px" width="11" height="11"><use href="#ic-clip"/></svg>
<div class="t" style="left:77.8px;top:109.7px">EatDown</div>
<svg style="left:64.0px;top:122.5px" width="11" height="11"><use href="#ic-clip"/></svg>
<div class="t" style="left:77.8px;top:121.7px">Rebirth</div>
<svg style="left:64.0px;top:134.5px" width="11" height="11"><use href="#ic-clip"/></svg>
<div class="t" style="left:77.8px;top:133.7px">WalkAttack</div>
<svg style="left:64.0px;top:146.5px" width="11" height="11"><use href="#ic-clip"/></svg>
<div class="t" style="left:77.8px;top:145.7px">WalkHit</div>
<svg style="left:64.0px;top:158.5px" width="11" height="11"><use href="#ic-avatar"/></svg>
<div class="t" style="left:77.8px;top:157.7px">IguanaAnimations2Avatar</div>
<svg style="left:34.4px;top:172.5px" width="5" height="6"><use href="#arr-right"/></svg>
<svg style="left:43.1px;top:170.5px" width="11" height="11"><use href="#ic-folder"/></svg>
<div class="t" style="left:56.9px;top:169.7px">Animator</div>
<svg style="left:33.9px;top:185.0px" width="6" height="5"><use href="#arr-down"/></svg>
<svg style="left:43.1px;top:182.5px" width="11" height="11"><use href="#ic-folderopen"/></svg>
<div class="t" style="left:56.9px;top:181.7px">Materials</div>
<svg style="left:53.6px;top:194.5px" width="11" height="11"><use href="#ic-mat"/></svg>
<div class="t" style="left:67.4px;top:193.7px">BakedIguanaLOD0</div>
<svg style="left:53.6px;top:206.5px" width="11" height="11"><use href="#ic-mat"/></svg>
<div class="t" style="left:67.4px;top:205.7px">BakedIguanaLOD1</div>
<svg style="left:33.9px;top:221.0px" width="6" height="5"><use href="#arr-down"/></svg>
<svg style="left:43.1px;top:218.5px" width="11" height="11"><use href="#ic-folderopen"/></svg>
<div class="t" style="left:56.9px;top:217.7px">Models</div>
<svg style="left:44.4px;top:233.0px" width="6" height="5"><use href="#arr-down"/></svg>
<svg style="left:53.6px;top:230.5px" width="11" height="11"><use href="#ic-model"/></svg>
<div class="t" style="left:67.4px;top:229.7px">IguanaModel</div>
<svg style="left:64.0px;top:242.5px" width="11" height="11"><use href="#ic-model"/></svg>
<div class="t" style="left:77.8px;top:241.7px">Iguana</div>
<svg style="left:64.0px;top:254.5px" width="11" height="11"><use href="#ic-model"/></svg>
<div class="t" style="left:77.8px;top:253.7px">Root</div>
<svg style="left:64.0px;top:266.5px" width="11" height="11"><use href="#ic-mesh"/></svg>
<div class="t" style="left:77.8px;top:265.7px">Iguana</div>
<svg style="left:64.0px;top:278.5px" width="11" height="11"><use href="#ic-avatar"/></svg>
<div class="t" style="left:77.8px;top:277.7px">IguanaModelAvatar</div>
<svg style="left:44.4px;top:293.0px" width="6" height="5"><use href="#arr-down"/></svg>
<svg style="left:53.6px;top:290.5px" width="11" height="11"><use href="#ic-model"/></svg>
<div class="t" style="left:67.4px;top:289.7px">IguanaModelTwoLODs</div>
<svg style="left:64.0px;top:302.5px" width="11" height="11"><use href="#ic-model"/></svg>
<div class="t" style="left:77.8px;top:301.7px">IguanaLOD0</div>
<svg style="left:64.0px;top:314.5px" width="11" height="11"><use href="#ic-model"/></svg>
<div class="t" style="left:77.8px;top:313.7px">IguanaLOD1</div>
<svg style="left:64.0px;top:326.5px" width="11" height="11"><use href="#ic-model"/></svg>
<div class="t" style="left:77.8px;top:325.7px">Root</div>
<svg style="left:64.0px;top:338.5px" width="11" height="11"><use href="#ic-mesh"/></svg>
<div class="t" style="left:77.8px;top:337.7px">IguanaLOD0</div>
<svg style="left:64.0px;top:350.5px" width="11" height="11"><use href="#ic-mesh"/></svg>
<div class="t" style="left:77.8px;top:349.7px">IguanaLOD1</div>
<svg style="left:64.0px;top:362.5px" width="11" height="11"><use href="#ic-avatar"/></svg>
<div class="t" style="left:77.8px;top:361.7px">IguanaModelTwoLODsAvatar</div>
<svg style="left:34.4px;top:376.5px" width="5" height="6"><use href="#arr-right"/></svg>
<svg style="left:43.1px;top:374.5px" width="11" height="11"><use href="#ic-folder"/></svg>
<div class="t" style="left:56.9px;top:373.7px">Prefabs</div>
<svg style="left:43.1px;top:386.5px" width="11" height="11"><use href="#ic-readme"/></svg>
<div class="t" style="left:56.9px;top:385.7px">Readme</div>
<svg style="left:34.4px;top:400.5px" width="5" height="6"><use href="#arr-right"/></svg>
<svg style="left:43.1px;top:398.5px" width="11" height="11"><use href="#ic-folder"/></svg>
<div class="t" style="left:56.9px;top:397.7px">Scenes</div>
<svg style="left:34.4px;top:412.5px" width="5" height="6"><use href="#arr-right"/></svg>
<svg style="left:43.1px;top:410.5px" width="11" height="11"><use href="#ic-folder"/></svg>
<div class="t" style="left:56.9px;top:409.7px">Scripts</div>
<svg style="left:34.4px;top:424.5px" width="5" height="6"><use href="#arr-right"/></svg>
<svg style="left:43.1px;top:422.5px" width="11" height="11"><use href="#ic-folder"/></svg>
<div class="t" style="left:56.9px;top:421.7px">Textures</div>
<svg style="left:13.5px;top:436.5px" width="5" height="6"><use href="#arr-right"/></svg>
<svg style="left:22.2px;top:434.5px" width="11" height="11"><use href="#ic-model"/></svg>
<div class="t" style="left:36.0px;top:433.7px">MFighter</div>
<svg style="left:13.5px;top:448.5px" width="5" height="6"><use href="#arr-right"/></svg>
<svg style="left:22.2px;top:446.5px" width="11" height="11"><use href="#ic-model"/></svg>
<div class="t" style="left:36.0px;top:445.7px">micro_zombie_mobile</div>
<svg style="left:13.5px;top:460.5px" width="5" height="6"><use href="#arr-right"/></svg>
<svg style="left:22.2px;top:458.5px" width="11" height="11"><use href="#ic-folder"/></svg>
<div class="t" style="left:36.0px;top:457.7px">Project1</div>
<svg style="left:13.5px;top:472.5px" width="5" height="6"><use href="#arr-right"/></svg>
<svg style="left:22.2px;top:470.5px" width="11" height="11"><use href="#ic-folder"/></svg>
<div class="t" style="left:36.0px;top:469.7px">Scenes</div>
<svg style="left:13.5px;top:484.5px" width="5" height="6"><use href="#arr-right"/></svg>
<svg style="left:22.2px;top:482.5px" width="11" height="11"><use href="#ic-folder"/></svg>
<div class="t" style="left:36.0px;top:481.7px">Scripts</div>
<svg style="left:13.0px;top:497.0px" width="6" height="5"><use href="#arr-down"/></svg>
<svg style="left:22.2px;top:494.5px" width="11" height="11"><use href="#ic-model"/></svg>
<div class="t" style="left:36.0px;top:493.7px">sls_amg_fbx</div>
</div>
<div class="a" style="left:638.5px;top:44.5px;width:10px;height:505.5px;background:#c8c8c8;border-left:1px solid #bababa"></div>
<svg style="left:640.5px;top:49px;" width="7" height="4" viewBox="0 0 7 4"><path d="M0 4L3.5 0L7 4Z" fill="#444"/></svg>
<div class="a" style="left:640.5px;top:80.5px;width:6.5px;height:123px;background:#a2a2a2;border-radius:3.5px"></div>
<svg style="left:640.5px;top:542px;" width="7" height="4" viewBox="0 0 7 4"><path d="M0 0L3.5 4L7 0Z" fill="#444"/></svg>
<div class="a" style="left:650px;top:14px;width:317px;height:14px;background:#a5a5a5"></div>
<div class="a" style="left:650px;top:14px;width:66.5px;height:15px;background:#cbcbcb"></div>
<div class="a" style="left:650px;top:14.5px;width:66.5px;height:1.5px;background:#3a7ad8"></div>
<div class="t " style="left:667.5px;top:16.6px;">Inspector</div>
<svg style="left:656.5px;top:18.5px;" width="8" height="8" viewBox="0 0 8 8"><circle cx="4" cy="4" r="3.8" fill="#444"/><path d="M4 3.3V6.3" stroke="#fff" stroke-width="1.2"/><circle cx="4" cy="1.9" r="0.65" fill="#fff"/></svg>
<svg style="left:940.5px;top:17.5px;" width="8" height="8" viewBox="0 0 8 8"><path d="M2 3.5V2.3A2 2 0 0 1 6 2.3" fill="none" stroke="#555" stroke-width="1"/><rect x="0.8" y="3.8" width="6.4" height="4" rx="1.8" fill="none" stroke="#555" stroke-width="1"/></svg>
<svg style="left:955px;top:17.5px" width="2" height="8" fill="#444"><use href="#dots"/></svg>
<div class="a" style="left:650px;top:28px;width:307px;height:25px;background:#cbcbcb"></div>
<div class="a" style="left:650px;top:53px;width:307px;height:1px;background:#9a9a9a"></div>
<div class="a" style="left:684px;top:28.8px;width:245px;height:2.2px;background:#f6f6f6;border-radius:1px"></div>
<svg style="left:657px;top:29px;" width="20" height="9" viewBox="0 0 20 9"><path d="M0 0.8H4M0 3.2H3" stroke="#333" stroke-width="0.9"/><path d="M4.8 6.4L8 1H15L18 6.4Z" fill="#137d8f" stroke="#137d8f" stroke-width="1.2" stroke-linejoin="round"/></svg>
<div class="a" style="left:650px;top:54px;width:307px;height:479px;background:#c8c8c8"></div>
<div class="a" style="left:957px;top:28px;width:10px;height:505px;background:#c2c2c2"></div>
<svg style="left:959px;top:33px;" width="7" height="4" viewBox="0 0 7 4"><path d="M0 4L3.5 0L7 4Z" fill="#444"/></svg>
<div class="a" style="left:959px;top:222.5px;width:6.5px;height:298px;background:#a2a2a2;border-radius:3.5px"></div>
<svg style="left:959px;top:525px;" width="7" height="4" viewBox="0 0 7 4"><path d="M0 0L3.5 4L7 0Z" fill="#444"/></svg>
<div class="t dis" style="left:664px;top:58.8px;">Length</div>
<div class="t dis" style="left:701px;top:58.8px;">1.250</div>
<div class="t dis" style="left:953px;top:58.8px;transform:translateX(-100%)">24 FPS</div>
<div class="a" style="left:663px;top:72px;width:291px;height:14px;background:#d2d2d2;border-bottom:1px solid #9a9a9a;border-radius:2px 2px 0 0"></div>
<div class="a" style="left:759.5px;top:72px;width:29.5px;height:13px;background:#b8c8df"></div>
<svg style="left:663px;top:72px;" width="291" height="14" viewBox="0 0 291 14"><rect x="6.45" y="4.70" width="1.1" height="7.5" fill="#2a2a2a"/><rect x="12.48" y="10.90" width="0.9" height="1.3" fill="#2a2a2a"/><rect x="18.42" y="10.90" width="0.9" height="1.3" fill="#2a2a2a"/><rect x="24.35" y="10.90" width="0.9" height="1.3" fill="#2a2a2a"/><rect x="30.23" y="8.20" width="1" height="4" fill="#2a2a2a"/><rect x="36.21" y="10.90" width="0.9" height="1.3" fill="#2a2a2a"/><rect x="42.15" y="10.90" width="0.9" height="1.3" fill="#2a2a2a"/><rect x="48.08" y="10.90" width="0.9" height="1.3" fill="#2a2a2a"/><rect x="53.96" y="8.20" width="1" height="4" fill="#2a2a2a"/><rect x="59.95" y="10.90" width="0.9" height="1.3" fill="#2a2a2a"/><rect x="65.88" y="10.90" width="0.9" height="1.3" fill="#2a2a2a"/><rect x="71.81" y="10.90" width="0.9" height="1.3" fill="#2a2a2a"/><rect x="77.70" y="8.20" width="1" height="4" fill="#2a2a2a"/><rect x="83.68" y="10.90" width="0.9" height="1.3" fill="#2a2a2a"/><rect x="89.61" y="10.90" width="0.9" height="1.3" fill="#2a2a2a"/><rect x="95.55" y="10.90" width="0.9" height="1.3" fill="#2a2a2a"/><rect x="101.43" y="8.20" width="1" height="4" fill="#2a2a2a"/><rect x="107.41" y="10.90" width="0.9" height="1.3" fill="#2a2a2a"/><rect x="113.34" y="10.90" width="0.9" height="1.3" fill="#2a2a2a"/><rect x="119.28" y="10.90" width="0.9" height="1.3" fill="#2a2a2a"/><rect x="125.11" y="4.70" width="1.1" height="7.5" fill="#2a2a2a"/><rect x="131.14" y="10.90" width="0.9" height="1.3" fill="#2a2a2a"/><rect x="137.08" y="10.90" width="0.9" height="1.3" fill="#2a2a2a"/><rect x="143.01" y="10.90" width="0.9" height="1.3" fill="#2a2a2a"/><rect x="148.89" y="8.20" width="1" height="4" fill="#2a2a2a"/><rect x="154.88" y="10.90" width="0.9" height="1.3" fill="#2a2a2a"/><rect x="160.81" y="10.90" width="0.9" height="1.3" fill="#2a2a2a"/><rect x="166.74" y="10.90" width="0.9" height="1.3" fill="#2a2a2a"/><rect x="172.62" y="8.20" width="1" height="4" fill="#2a2a2a"/><rect x="178.61" y="10.90" width="0.9" height="1.3" fill="#2a2a2a"/><rect x="184.54" y="10.90" width="0.9" height="1.3" fill="#2a2a2a"/><rect x="190.47" y="10.90" width="0.9" height="1.3" fill="#2a2a2a"/><rect x="196.36" y="8.20" width="1" height="4" fill="#2a2a2a"/><rect x="202.34" y="10.90" width="0.9" height="1.3" fill="#2a2a2a"/><rect x="208.27" y="10.90" width="0.9" height="1.3" fill="#2a2a2a"/><rect x="214.20" y="10.90" width="0.9" height="1.3" fill="#2a2a2a"/><rect x="220.09" y="8.20" width="1" height="4" fill="#2a2a2a"/><rect x="226.07" y="10.90" width="0.9" height="1.3" fill="#2a2a2a"/><rect x="232.00" y="10.90" width="0.9" height="1.3" fill="#2a2a2a"/><rect x="237.94" y="10.90" width="0.9" height="1.3" fill="#2a2a2a"/><rect x="243.77" y="4.70" width="1.1" height="7.5" fill="#2a2a2a"/><rect x="249.80" y="10.90" width="0.9" height="1.3" fill="#2a2a2a"/><rect x="255.74" y="10.90" width="0.9" height="1.3" fill="#2a2a2a"/><rect x="261.67" y="10.90" width="0.9" height="1.3" fill="#2a2a2a"/><rect x="267.55" y="8.20" width="1" height="4" fill="#2a2a2a"/><rect x="273.54" y="10.90" width="0.9" height="1.3" fill="#2a2a2a"/><rect x="279.47" y="10.90" width="0.9" height="1.3" fill="#2a2a2a"/><rect x="285.40" y="10.90" width="0.9" height="1.3" fill="#2a2a2a"/></svg>
<div class="t " style="left:672.5px;top:73.4px;font-size:8.6px;letter-spacing:-0.3px;-webkit-text-stroke:0.05px">0:00</div>
<div class="t " style="left:791.5px;top:73.4px;font-size:8.6px;letter-spacing:-0.3px;-webkit-text-stroke:0.05px">5:00</div>
<div class="t " style="left:910px;top:73.4px;font-size:8.6px;letter-spacing:-0.3px;-webkit-text-stroke:0.05px">10:00</div>
<svg style="left:753.5px;top:74.5px;" width="7" height="8" viewBox="0 0 7 8"><path d="M0.5 0.5H4.5V4L6.5 7.5L0.5 5.5Z" fill="#2b78e0" stroke="#1a1a3a" stroke-width="0.6"/></svg>
<svg style="left:788px;top:74.5px;" width="7" height="8" viewBox="0 0 7 8"><path d="M0.5 0.5H6V5.5L0.5 7.5Z" fill="#2b78e0" stroke="#1a1a3a" stroke-width="0.6"/></svg>
<div class="a" style="left:664px;top:90.5px;width:290px;height:3px;background:#a7a7a7;border-radius:1.5px"></div>
<div class="t " style="left:664px;top:99.4px;">Start</div>
<div class="a" style="left:703px;top:98.5px;width:23px;height:12px;background:#f0f0f0;border-radius:2px"></div>
<div class="t " style="left:705px;top:99.4px;">90</div>
<div class="t " style="left:891.5px;top:99.4px;">End</div>
<div class="a" style="left:930px;top:98.5px;width:23.5px;height:12px;background:#f0f0f0;border-radius:2px"></div>
<div class="t " style="left:931.5px;top:99.4px;">120</div>
<div class="t " style="left:664px;top:122.4px;">Loop Time</div>
<div class="a" style="left:778.8px;top:123px;width:9.5px;height:9.5px;background:#f0f0f0;border-radius:1.5px"></div>
<div class="t dis" style="left:675.6px;top:137.1px;">Loop Pose</div>
<div class="a" style="left:778.8px;top:137.5px;width:9.5px;height:9.5px;background:#dcdcdc;border-radius:1.5px"></div>
<div class="t dis" style="left:675.6px;top:151.8px;">Cycle Offset</div>
<div class="a" style="left:779px;top:151.5px;width:175px;height:12px;background:#d2d2d2;border-radius:2px"></div>
<div class="t dis" style="left:780.8px;top:152.2px;">0</div>
<div class="t " style="left:664px;top:171.3px;">Root Transform Rotation</div>
<div class="t " style="left:675.6px;top:185.6px;">Bake Into Pose</div>
<div class="a" style="left:778.8px;top:186px;width:9.5px;height:9.5px;background:#f0f0f0;border-radius:1.5px"></div>
<div class="t " style="left:938.5px;top:185.0px;transform:translateX(-100%);font-size:8.6px">loop match</div>
<svg style="left:942.5px;top:186.0px;" width="11" height="11" viewBox="0 0 11 11"><circle cx="5.2" cy="5.2" r="4.7" fill="#33ee2e" stroke="#2a4a2a" stroke-width="0.8"/></svg>
<div class="t " style="left:675.6px;top:200.5px;">Based Upon (at Start)</div>
<div class="a" style="left:779px;top:200.0px;width:175px;height:12.5px;background:#e4e4e4;border-radius:2px;border-bottom:1px solid #b4b4b4"></div>
<div class="t " style="left:781px;top:200.6px;">Root Node Rotation</div>
<svg style="left:943px;top:205.0px;" width="7" height="4" viewBox="0 0 7 4"><use href="#drop"/></svg>
<div class="t " style="left:675.6px;top:215.4px;">Offset</div>
<div class="a" style="left:779px;top:215px;width:175px;height:12px;background:#f0f0f0;border-radius:2px"></div>
<div class="t " style="left:780.8px;top:215.7px;">0</div>
<div class="t " style="left:664px;top:235.4px;">Root Transform Position (Y)</div>
<div class="t " style="left:675.6px;top:249.5px;">Bake Into Pose</div>
<div class="a" style="left:778.8px;top:250px;width:9.5px;height:9.5px;background:#f0f0f0;border-radius:1.5px"></div>
<div class="t " style="left:938.5px;top:248.9px;transform:translateX(-100%);font-size:8.6px">loop match</div>
<svg style="left:942.5px;top:249.89999999999998px;" width="11" height="11" viewBox="0 0 11 11"><circle cx="5.2" cy="5.2" r="4.7" fill="#33ee2e" stroke="#2a4a2a" stroke-width="0.8"/></svg>
<div class="t " style="left:675.6px;top:264.7px;">Based Upon (at Start)</div>
<div class="a" style="left:779px;top:264.0px;width:175px;height:12.5px;background:#e4e4e4;border-radius:2px;border-bottom:1px solid #b4b4b4"></div>
<div class="t " style="left:781px;top:264.6px;">Original</div>
<svg style="left:943px;top:269.0px;" width="7" height="4" viewBox="0 0 7 4"><use href="#drop"/></svg>
<div class="t " style="left:675.6px;top:279.3px;">Offset</div>
<div class="a" style="left:779px;top:279px;width:175px;height:12px;background:#f0f0f0;border-radius:2px"></div>
<div class="t " style="left:780.8px;top:279.7px;">0</div>
<div class="t " style="left:664px;top:298.7px;">Root Transform Position (XZ)</div>
<div class="t " style="left:675.6px;top:313.1px;">Bake Into Pose</div>
<div class="a" style="left:778.8px;top:313.5px;width:9.5px;height:9.5px;background:#f0f0f0;border-radius:1.5px"></div>
<div class="t " style="left:938.5px;top:312.5px;transform:translateX(-100%);font-size:8.6px">loop match</div>
<svg style="left:942.5px;top:313.5px;" width="11" height="11" viewBox="0 0 11 11"><circle cx="5.2" cy="5.2" r="4.7" fill="#33ee2e" stroke="#2a4a2a" stroke-width="0.8"/></svg>
<div class="t " style="left:675.6px;top:328.0px;">Based Upon</div>
<div class="a" style="left:779px;top:327.5px;width:175px;height:12.5px;background:#e4e4e4;border-radius:2px;border-bottom:1px solid #b4b4b4"></div>
<div class="t " style="left:781px;top:328.1px;">Root Node Position</div>
<svg style="left:943px;top:332.5px;" width="7" height="4" viewBox="0 0 7 4"><use href="#drop"/></svg>
<div class="t " style="left:664px;top:348.8px;">Additive Reference Pose</div>
<div class="a" style="left:778.8px;top:349.5px;width:9.5px;height:9.5px;background:#f0f0f0;border-radius:1.5px"></div>
<div class="t dis" style="left:675.6px;top:363.8px;">Pose Frame</div>
<div class="a" style="left:779px;top:364px;width:175px;height:12px;background:#d2d2d2;border-radius:2px"></div>
<div class="t dis" style="left:780.8px;top:364.7px;">0</div>
<svg style="left:657.5px;top:388.3px;" width="6" height="5" viewBox="0 0 6 5"><use href="#arr-down"/></svg>
<div class="t " style="left:666.5px;top:384.6px;">Curves</div>
<svg style="left:665px;top:404px;" width="9" height="9" viewBox="0 0 9 9"><circle cx="4.5" cy="4.5" r="4.5" fill="#555"/><rect x="2" y="3.8" width="5" height="1.4" fill="#ddd"/></svg>
<div class="a" style="left:679px;top:403px;width:115px;height:12px;background:#f0f0f0;border-radius:2px"></div>
<div class="t " style="left:681px;top:403.4px;">Chewyness</div>
<div class="a" style="left:679px;top:418px;width:20px;height:12px;background:#e4e4e4;border-radius:2px;border-bottom:1px solid #b0b0b0"></div>
<svg style="left:684.5px;top:420.5px;" width="9" height="7" viewBox="0 0 9 7"><rect x="0.5" y="0.5" width="1.4" height="6" fill="#222"/><path d="M8 0.5V6.5L2.5 3.5Z" fill="#222"/></svg>
<div class="a" style="left:703px;top:418px;width:20px;height:12px;background:#e4e4e4;border-radius:2px;border-bottom:1px solid #b0b0b0"></div>
<svg style="left:708.5px;top:420.5px;" width="9" height="7" viewBox="0 0 9 7"><rect x="6.6" y="0.5" width="1.4" height="6" fill="#222"/><path d="M0.5 0.5V6.5L6 3.5Z" fill="#222"/></svg>
<div class="a" style="left:727px;top:418px;width:44px;height:12px;background:#d4d4d4;border-radius:2px"></div>
<div class="t dis" style="left:729px;top:418.4px;font-size:9.6px">0.747</div>
<div class="a" style="left:774px;top:418px;width:20px;height:12px;background:#e4e4e4;border-radius:2px;border-bottom:1px solid #b0b0b0"></div>
<svg style="left:778px;top:420px;" width="12" height="9" viewBox="0 0 12 9"><path d="M4 0.8L7 3.8L4 6.8L1 3.8Z" fill="none" stroke="#444" stroke-width="0.8"/><path d="M8.5 4.5V8.5M6.5 6.5H10.5" stroke="#333" stroke-width="1"/></svg>
<svg style="left:663px;top:434px;" width="11" height="11" viewBox="0 0 11 11"><circle cx="5.5" cy="5.5" r="5.2" fill="#8c8c8c"/><path d="M5.5 1.5V9.5M1.5 5.5H9.5" stroke="#a9a9a9" stroke-width="0.9"/><circle cx="5.5" cy="5.5" r="3" fill="none" stroke="#a9a9a9" stroke-width="0.8"/></svg>
<div class="a" style="left:797px;top:404px;width:157px;height:30px;background:#555;border:1px solid #2e2e2e"></div>
<svg style="left:797px;top:404px;" width="157" height="30" viewBox="0 0 157 30"><path d="M1.5 28.5 C 18 27.5 38 19 58 9 C 72 1.5 84 -0.5 100 2 C 118 5 138 11 156 12" fill="none" stroke="#27c81b" stroke-width="1.2"/></svg>
<svg style="left:658.5px;top:451.5px;" width="5" height="6" viewBox="0 0 5 6"><use href="#arr-right"/></svg>
<div class="t " style="left:666.6px;top:448.8px;">Events</div>
<svg style="left:658.5px;top:466.5px;" width="5" height="6" viewBox="0 0 5 6"><use href="#arr-right"/></svg>
<div class="t " style="left:666.6px;top:463.8px;">Mask</div>
<svg style="left:658.5px;top:481.5px;" width="5" height="6" viewBox="0 0 5 6"><use href="#arr-right"/></svg>
<div class="t " style="left:666.6px;top:478.7px;">Motion</div>
<svg style="left:658.5px;top:496.5px;" width="5" height="6" viewBox="0 0 5 6"><use href="#arr-right"/></svg>
<div class="t " style="left:666.6px;top:494.0px;">Import Messages</div>
<div class="a" style="left:883px;top:514.5px;width:35px;height:13px;background:#e4e4e4;border-radius:2px;border-bottom:1px solid #aaa"></div>
<div class="t " style="left:886.5px;top:515.4px;">Revert</div>
<div class="a" style="left:922px;top:514.5px;width:31px;height:13px;background:#e4e4e4;border-radius:2px;border-bottom:1px solid #aaa"></div>
<div class="t " style="left:925.5px;top:515.4px;">Apply</div>
<div class="a" style="left:650px;top:532.5px;width:317px;height:1px;background:#a0a0a0"></div>
<div class="a" style="left:650px;top:533.5px;width:317px;height:16.5px;background:#cbcbcb"></div>
<div class="t " style="left:655px;top:536.1px;font-size:9.6px"><b>Eat</b></div>
<div class="a" style="left:673.5px;top:540px;width:280px;height:1px;background:#9a9a9a"></div>
<div class="a" style="left:673.5px;top:543px;width:280px;height:1px;background:#9a9a9a"></div>
<div class="a" style="left:955px;top:533.5px;width:1px;height:16.5px;background:#b0b0b0"></div>
<svg style="left:960px;top:538px" width="2" height="8" fill="#444"><use href="#dots"/></svg>
<div class="a" style="left:641.5px;top:381px;width:330.5px;height:70.5px;border:2px solid #e85a50"></div>
</body></html>
